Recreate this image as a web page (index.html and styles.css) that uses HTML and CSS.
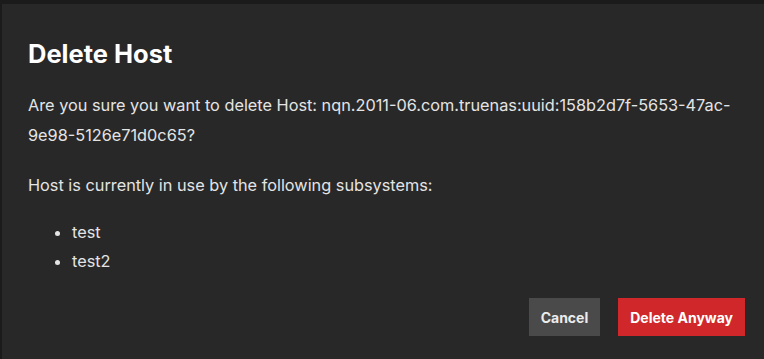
FILE: index.html
```html
<!DOCTYPE html>
<html>
<head>
<meta charset="utf-8">
<link rel="stylesheet" href="styles.css">
</head>
<body>
<div class="dialog">
  <h1 class="title">Delete Host</h1>
  <div class="content">
    <p class="msg">Are you sure you want to delete Host: nqn.2011-06.com.truenas:uuid:158b2d7f-5653-47ac-9e98-5126e71d0c65?</p>
    <p class="msg">Host is currently in use by the following subsystems:</p>
    <ul class="list">
      <li>test</li>
      <li>test2</li>
    </ul>
  </div>
  <div class="actions">
    <button class="btn btn-cancel">Cancel</button>
    <button class="btn btn-danger">Delete Anyway</button>
  </div>
</div>
</body>
</html>
```
FILE: styles.css
```css
html, body {
  margin: 0;
  padding: 0;
  height: 100%;
  background: #1b1b1b;
  font-family: Inter, "Noto Sans", sans-serif;
}
body {
  padding: 4px 0 0 2px;
  box-sizing: border-box;
}
.dialog {
  background: #282828;
  height: 100%;
  box-sizing: border-box;
  padding: 24px 19px 0 26px;
  display: flex;
  flex-direction: column;
}
.title {
  margin: 10px 0 0;
  font-size: 25.5px;
  line-height: 32px;
  font-weight: 700;
  color: #ffffff;
}
.content {
  color: #e4e4e4;
  font-size: 16.3px;
  line-height: 30px;
}
.msg {
  margin: 20px 0 0;
}
.list {
  margin: 18px 0 0;
  padding-left: 44px;
  line-height: 29px;
}
.actions {
  display: flex;
  justify-content: flex-end;
  gap: 18px;
  margin-top: 22px;
}
.btn {
  border: none;
  font-family: Inter, "Noto Sans", sans-serif;
  font-weight: 700;
  font-size: 14px;
  height: 38px;
  padding: 0 12px;
  color: #ececec;
}
.btn-cancel {
  background: #4a4a4a;
}
.btn-danger {
  background: #d0282a;
  color: #ffffff;
}
```
